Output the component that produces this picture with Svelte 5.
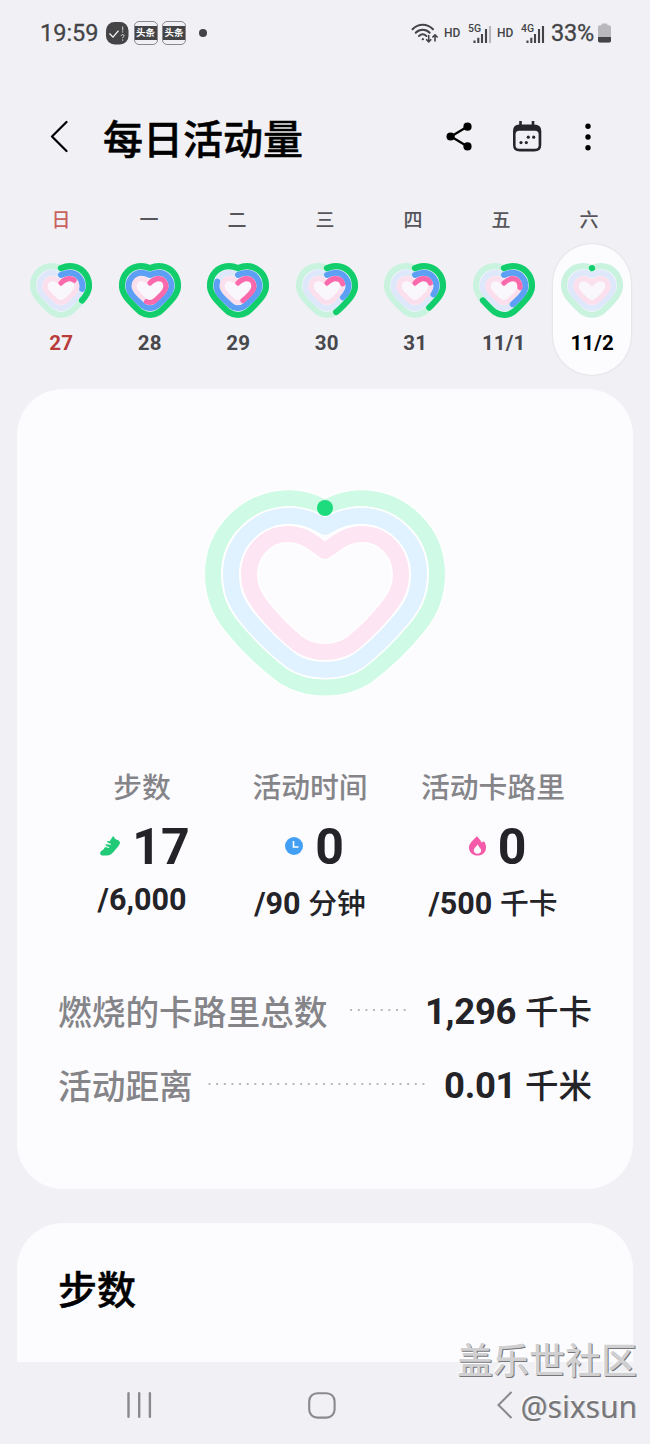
<script lang="ts">
  type Day = { name: string; date: string; steps: number; time: number; calories: number };

  const days: Day[] = [
    { name: '日', date: '27', steps: 34, time: 26, calories: 16 },
    { name: '一', date: '28', steps: 100, time: 100, calories: 54 },
    { name: '二', date: '29', steps: 100, time: 80, calories: 44 },
    { name: '三', date: '30', steps: 44, time: 34, calories: 21 },
    { name: '四', date: '31', steps: 40, time: 31, calories: 20 },
    { name: '五', date: '11/1', steps: 66, time: 42, calories: 25 },
    { name: '六', date: '11/2', steps: 0.01, time: 0, calories: 0 },
  ];
  const selected = '11/2';

  // right half of each ring, starting at the notch and ending at the bottom tip
  const largeRings = [
    { color: '#cffae5', half: [120, 18, 131, 12, 142, 8.2, 155, 8.2, 198, 8.2, 232, 42, 232, 84, 232, 105, 226, 120, 214.5, 134.5, 199, 154, 180, 172, 162, 185.5, 149, 194, 135, 197.5, 120, 197.5] },
    { color: '#e0f1ff', half: [120, 37, 131, 30, 142, 25.7, 155, 25.7, 188, 25.7, 214, 52, 214, 84, 214, 103, 208, 115, 197, 128.5, 183, 145, 168, 160, 153, 171, 143, 178, 132, 179.8, 120, 179.8] },
    { color: '#fde5f3', half: [120, 61, 131, 54, 140, 44, 157, 44, 179, 44, 196, 62, 196, 85, 196, 98, 191, 108, 182, 118.5, 172, 131, 160, 143, 148, 153, 140, 159, 131, 162, 120, 162] },
  ];

  const smallRings = [
    { key: 'steps', width: 6.2, color: '#12cd6c', track: '#c9f3df', half: [31, 5.2, 34, 4, 37, 3.2, 40, 3.2, 51, 3.2, 59, 12, 59, 23, 59, 29, 56, 33, 52, 37.5, 47, 43, 43, 47, 40, 49.2, 37, 51.2, 34, 52, 31, 52] },
    { key: 'time', width: 5.9, color: '#5c9ff5', track: '#dfe8fb', half: [31, 12, 34, 10.5, 37, 9.7, 39.5, 9.7, 47, 9.7, 52.5, 16, 52.5, 23, 52.5, 27.5, 50, 31, 47, 34.3, 44, 37.5, 41, 40, 38, 42.7, 36, 44.3, 34, 45.3, 31, 45.3] },
    { key: 'calories', width: 5.2, color: '#f969ab', track: '#fbdfec', half: [31, 20, 33, 18, 36, 15.7, 39.5, 15.7, 44, 15.7, 47, 19, 47, 23.5, 47, 26.5, 45, 28.5, 43, 31, 40.5, 33.5, 38, 36, 35.5, 38, 34, 39.2, 32.5, 39.5, 31, 39.5] },
  ] as const;

  function heart(half: readonly number[]) {
    const center = half[0];
    const points: number[][] = [];
    for (let i = 0; i < half.length; i += 2) points.push([half[i], half[i + 1]]);
    const mirrored = points.slice(0, -1).reverse().map(([x, y]) => [2 * center - x, y]);
    return `M${points[0].join(' ')}C${[...points.slice(1), ...mirrored].flat().join(' ')}Z`;
  }
</script>

<div class="screen">
  <header class="status">
    <span class="clock">19:59</span>
    <svg class="app-icon" width="23" height="23" viewBox="0 0 23 23">
      <rect width="22.5" height="22.5" rx="8.5" fill="#444447" />
      <path d="M3.5 11.5l3.5 3.7 5.5-6.5" fill="none" stroke="#fff" stroke-width="1.2" />
      <path d="M16.7 4.5v4M16.7 9.3v1.2M15.2 14c0-2 3.2-1.8 2.8 0-.2.9-1.3.9-1.3 2.2M16.7 17.5v1.2" fill="none" stroke="#ddd" stroke-width="1" />
    </svg>
    <span class="news"><b>头条</b></span>
    <span class="news"><b>头条</b></span>
    <i class="more-dot"></i>

    <div class="signals">
      <svg class="wifi" width="28" height="21" viewBox="0 0 28 21" fill="none" stroke="#444447" stroke-width="2" stroke-linecap="round">
        <path d="M1.5 6.2C7.5.2 16 .2 22 6.2M4.7 9.7c4-4 10-4 14 0M8 13c2.4-2.2 5-2.2 7.4 0" />
        <circle cx="11.7" cy="16.2" r=".7" fill="#444447" stroke-width="1" />
        <path d="M17.7 12.5v6.3M15.6 16.7l2.1 2.1 2.1-2.1M24 18v-6M21.8 14l2.2-2.1 2.2 2.1" stroke-width="1.6" />
      </svg>
      <span class="hd">HD</span>
      <svg class="bars" width="24" height="21" viewBox="0 0 24 21">
        <text x="0" y="8.5">5G</text>
        <path d="M6.5 17.5v2.5M10.3 14.7v5.3M14 11v9M18 6v14" />
        <path class="faint" d="M22 3v17" />
      </svg>
      <span class="hd second">HD</span>
      <svg class="bars" width="24" height="21" viewBox="0 0 24 21">
        <text x="0" y="8.5">4G</text>
        <path d="M6.5 17.5v2.5M10.3 14.7v5.3M14 11v9M18 6v14M22 3v17" />
      </svg>
      <span class="percent">33%</span>
      <svg width="13" height="20" viewBox="0 0 13 20">
        <path d="M3.5 2.2V1.5Q3.5.5 4.5.5h4q1 0 1 1v.7h1.7Q13 2.2 13 4v13.7q0 1.8-1.8 1.8H1.8Q0 19.5 0 17.7V4q0-1.8 1.8-1.8z" fill="#b9b9bd" />
        <path d="M0 14h13v3.7q0 1.8-1.8 1.8H1.8Q0 19.5 0 17.7z" fill="#444447" />
      </svg>
    </div>
  </header>

  <nav class="toolbar">
    <svg width="18" height="33" viewBox="0 0 18 33" fill="none" stroke="#000" stroke-width="2.2" stroke-linecap="round" stroke-linejoin="round">
      <path d="M16.5 2L2 16.5 16.5 31" />
    </svg>
    <h1>每日活动量</h1>
    <svg class="share" width="26" height="29" viewBox="0 0 26 29">
      <path d="M21.5 4.5L5 14.5l16.5 10" fill="none" stroke="#000" stroke-width="2.3" />
      <circle cx="21.5" cy="4.7" r="4.1" /><circle cx="4.6" cy="14.5" r="4.1" /><circle cx="21.5" cy="24.4" r="4.1" />
    </svg>
    <svg class="calendar" width="30" height="31" viewBox="0 0 30 31" fill="#25252b">
      <path d="M7.2 0h2.6v3.5h9.9V0h2.6v3.5Q29.3 3.5 29.3 10v14q0 6.5-7 6.5H7.7Q1 30.5 1 24V10q0-6.5 6.2-6.5z" />
      <rect x="3.6" y="9.8" width="23" height="18" rx="3.5" fill="#f1f1f5" />
      <circle cx="16.3" cy="16.2" r="1.6" /><circle cx="21.7" cy="16.2" r="1.6" />
      <circle cx="9" cy="21.6" r="1.6" /><circle cx="14.3" cy="21.6" r="1.6" />
    </svg>
    <svg class="menu" width="6" height="28" viewBox="0 0 6 28">
      <circle cx="3" cy="3.2" r="2.7" /><circle cx="3" cy="14" r="2.7" /><circle cx="3" cy="24.7" r="2.7" />
    </svg>
  </nav>

  <div class="week-names">
    {#each days as day, i}
      <span class:sunday={i === 0}>{day.name}</span>
    {/each}
  </div>

  <div class="week">
    {#each days as day, i}
      <div class="day" class:selected={day.date === selected} class:sunday={i === 0}>
        <svg width="62" height="56" viewBox="0 0 62 56" fill="none" stroke-linecap="round">
          <path d={heart(smallRings[1].half)} fill="#f9f7fb" stroke="#f4fafc" stroke-width="7" />
          {#each smallRings as ring}
            <path d={heart(ring.half)} stroke={ring.track} stroke-width={ring.width} />
          {/each}
          {#each smallRings as ring}
            {#if day[ring.key] > 0}
              <path d={heart(ring.half)} stroke={ring.color} stroke-width={ring.width} pathLength="100" stroke-dasharray="{day[ring.key]} 200" />
            {/if}
          {/each}
        </svg>
        <span class="date">{day.date}</span>
      </div>
    {/each}
  </div>

  <main>
    <section class="card">
      <svg class="heart" width="240" height="206" viewBox="0 0 240 206" fill="none" stroke-width="16" stroke-linejoin="round">
        {#each largeRings as ring}
          <path d={heart(ring.half)} stroke="#fff" stroke-width="19" />
          <path d={heart(ring.half)} stroke={ring.color} />
        {/each}
        <circle cx="120" cy="18" r="8" fill="#1edb7e" />
      </svg>

      <div class="metrics">
        <div class="metric">
          <h2>步数</h2>
          <div class="value">
            <svg class="shoe" width="20" height="20" viewBox="0 0 20 20">
              <path d="M12.8.5q.7-.6 1.2.3c.6 1.8 1.7 3 3.5 3.2 1.3.4 2.8 1.5 2.4 3.2-.7 2.3-3 4.5-5 7-2.2 2.8-4.2 5-7.5 5.2H2.2C.2 19.2-.4 17 .8 15.6c1.500-1.500 3.500-2.600 5-4.600z" fill="#20ca76" />
              <path d="M5 12.3l3.6.8M6.3 9l3.800 1M7.8 5.8l4 1" fill="none" stroke="#20ca76" stroke-width="1.6" stroke-linecap="round" />
              <path d="M5.5 10.5l3.6 1M7 7.3l3.8 1" fill="none" stroke="#fcfcff" stroke-width="1.2" />
            </svg>
            <strong>17</strong>
          </div>
          <p class="goal latin">/6,000</p>
        </div>
        <div class="metric">
          <h2>活动时间</h2>
          <div class="value">
            <svg class="timer" width="18" height="18" viewBox="0 0 18 18">
              <circle cx="9" cy="9" r="9" fill="#439ff3" />
              <path d="M8.5 4v6h5" fill="none" stroke="#fff" stroke-width="1.6" />
            </svg>
            <strong>0</strong>
          </div>
          <p class="goal">/90 <span>分钟</span></p>
        </div>
        <div class="metric">
          <h2>活动卡路里</h2>
          <div class="value">
            <svg class="flame" width="17" height="20" viewBox="0 0 17 20">
              <path d="M7.3.8Q8 .1 8.6.8c1.4 2 3 3.4 3.900 5.700q1.300-.2 1.800-.9.8-.4 1.200.5C16.500 7.700 17 9.500 17 11.700 17 16.500 13 19.600 8.500 19.600S0 16.500 0 11.800C0 7 4.300 4.500 7.300.8z" fill="#f55ba8" />
              <path d="M8.6 8.3C7.600 11 4.800 11.800 4.800 14.600c0 4.200 7.400 4.200 7.400 0 0-2.200-2.500-3.500-3.600-6.300z" fill="#fcfcff" />
            </svg>
            <strong>0</strong>
          </div>
          <p class="goal">/500 <span>千卡</span></p>
        </div>
      </div>

      <div class="total">
        <span class="label">燃烧的卡路里总数</span>
        <i class="leader"></i>
        <span class="amount">1,296 <small>千卡</small></span>
      </div>
      <div class="total">
        <span class="label">活动距离</span>
        <i class="leader"></i>
        <span class="amount">0.01 <small>千米</small></span>
      </div>
    </section>

    <section class="card steps">
      <h2>步数</h2>
    </section>
  </main>

  <footer>
    <svg width="26" height="26" viewBox="0 0 26 26" stroke="#8a8a8e" stroke-width="2.4" stroke-linecap="round">
      <path d="M1.5 1.2v23.600M12.2 1.2v23.600M22.9 1.2v23.600" />
    </svg>
    <svg class="home" width="28" height="27" viewBox="0 0 28 27" fill="none" stroke="#8a8a8e" stroke-width="2.1">
      <rect x="1.2" y="1.2" width="25.4" height="24.4" rx="8" />
    </svg>
    <svg class="back" width="16" height="28" viewBox="0 0 16 28" fill="none" stroke="#8a8a8e" stroke-width="2.1">
      <path d="M14.5 1L1.5 14l13 13" />
    </svg>
  </footer>

  <div class="watermark">
    <span>盖乐世社区</span>
    <span class="user">@sixsun</span>
  </div>
</div>

<style>
  :global(body) {
    margin: 0;
    background: #f1f1f5;
  }

  .screen {
    position: relative;
    display: flex;
    flex-direction: column;
    width: 650px;
    height: 1444px;
    overflow: hidden;
    background: #f1f1f5;
    color: #232328;
    font-family: Roboto, 'Noto Sans CJK SC', sans-serif;
  }

  svg {
    display: block;
    flex: none;
  }

  h1,
  h2,
  p {
    margin: 0;
  }

  .status {
    display: flex;
    align-items: center;
    box-sizing: border-box;
    height: 66px;
    padding: 0 39px 0 40px;
    color: #444447;
  }

  .clock {
    width: 66px;
    font-size: 23.5px;
    font-weight: 400;
    -webkit-text-stroke: 0.3px;
  }

  .news {
    display: flex;
    align-items: center;
    box-sizing: border-box;
    width: 24px;
    height: 24px;
    margin-left: 4.5px;
    border: 1px solid #89898c;
    border-radius: 5px;
  }

  .news b {
    width: 22px;
    background: #444447;
    color: #fff;
    font-size: 9.5px;
    line-height: 14px;
    text-align: center;
  }

  .more-dot {
    width: 8px;
    height: 8px;
    margin-left: 13px;
    border-radius: 50%;
    background: #444447;
  }

  .signals {
    display: flex;
    align-items: center;
    margin-left: auto;
  }

  .hd {
    margin-left: 5px;
    width: 24px;
    font-size: 12px;
    font-weight: 500;
  }

  .hd.second {
    margin-left: 5px;
  }

  .bars {
    fill: none;
    stroke: #444447;
    stroke-width: 2.1;
  }

  .bars text {
    fill: #444447;
    stroke: none;
    font-size: 10.5px;
    font-weight: 500;
  }

  .faint {
    stroke: #b9b9bd;
  }

  .percent {
    margin: 0 4px 0 6px;
    font-size: 23.5px;
    font-weight: 400;
    letter-spacing: -0.2px;
    -webkit-text-stroke: 0.3px;
  }

  .toolbar {
    display: flex;
    align-items: center;
    height: 141px;
    padding: 0 59px 0 50px;
  }

  .toolbar h1 {
    margin: 9px auto 0 35px;
    color: #000;
    font-size: 40px;
    font-weight: 500;
    line-height: 48px;
    -webkit-text-stroke: 0.5px;
  }

  .calendar {
    margin-left: 40px;
  }

  .menu {
    margin-left: 43px;
  }

  .week-names {
    display: grid;
    grid-template-columns: repeat(7, 88px);
    box-sizing: border-box;
    height: 37px;
    padding: 2px 0 0 17px;
    color: #55555a;
    font-size: 19px;
    font-weight: 500;
    line-height: 24px;
    text-align: center;
  }

  .week-names .sunday {
    color: #c9615f;
  }

  .week {
    display: grid;
    grid-template-columns: repeat(7, 88.5px);
    justify-items: center;
    height: 145px;
    padding-left: 17px;
  }

  .day {
    display: flex;
    flex-direction: column;
    align-items: center;
    box-sizing: border-box;
    width: 78px;
    height: 131px;
    padding-top: 19px;
    color: #47474c;
  }

  .day.sunday {
    color: #b83c39;
  }

  .day.selected {
    border-radius: 39px;
    background: #fcfcff;
    box-shadow: 0 0 2px rgba(0, 0, 0, 0.15);
    color: #000;
  }

  .date {
    margin-top: 12px;
    font-size: 20.5px;
    font-weight: 700;
    line-height: 24px;
    letter-spacing: 0.2px;
  }

  main {
    height: 973px;
    overflow: hidden;
    padding: 0 17px;
  }

  .card {
    box-sizing: border-box;
    height: 800px;
    padding: 101px 41px 0;
    border-radius: 46px;
    background: #fcfcff;
  }

  .heart {
    margin: 0 auto;
  }

  .metrics {
    display: grid;
    grid-template-columns: 168px 168px 198px;
    box-sizing: border-box;
    height: 278px;
    padding-top: 72px;
  }

  .metric {
    display: flex;
    flex-direction: column;
    align-items: center;
  }

  .metric h2 {
    color: #858589;
    font-size: 28.8px;
    font-weight: 500;
    line-height: 40px;
  }

  .value {
    display: flex;
    align-items: center;
    gap: 12px;
    height: 78px;
    margin-left: 9px;
  }

  .value svg {
    margin-top: -2px;
  }

  .value strong {
    font-size: 50px;
    font-weight: 700;
    line-height: 60px;
  }

  .metric:first-child .value {
    margin-left: 6px;
  }

  .goal {
    font-size: 30.5px;
    font-weight: 700;
    line-height: 36px;
    white-space: nowrap;
  }

  .goal.latin {
    margin-top: -4px;
  }

  .goal span {
    font-size: 28.8px;
    font-weight: 500;
  }

  .total {
    display: flex;
    align-items: center;
    height: 74px;
    white-space: nowrap;
  }

  .label {
    margin-top: -1px;
    color: #858589;
    font-size: 33.7px;
    font-weight: 500;
  }

  .leader {
    flex: 1;
    height: 2px;
    margin: -2px 17px 0 20px;
    background: radial-gradient(circle, #b5b5ba 1px, transparent 1.3px) right 0 / 7.65px 2px repeat-x;
  }

  .total:last-child .leader {
    margin-left: 15px;
  }

  .amount {
    margin-top: -4px;
    font-size: 36.5px;
    font-weight: 700;
    letter-spacing: -0.3px;
  }

  .amount small {
    font-size: 33.5px;
    font-weight: 500;
    letter-spacing: 0;
  }

  .card.steps {
    margin-top: 34px;
    height: 200px;
    padding-top: 40px;
  }

  .steps h2 {
    color: #000;
    font-size: 39px;
    font-weight: 500;
    line-height: 56px;
    -webkit-text-stroke: 0.5px;
  }

  footer {
    display: flex;
    align-items: center;
    box-sizing: border-box;
    height: 82px;
    padding: 4px 137px 0 127px;
  }

  .home {
    margin: 0 auto 0 155px;
  }

  .watermark {
    position: absolute;
    right: 13px;
    bottom: 16px;
    display: flex;
    flex-direction: column;
    align-items: flex-end;
    color: #d0d0d2;
    font-family: 'Noto Sans CJK SC', sans-serif;
    font-size: 36px;
    font-weight: 500;
    line-height: 36px;
    text-shadow: 1px 1px 0 #77777a, -1px -1px 0 #fff;
  }

  .watermark .user {
    margin-top: 10px;
    color: #77777a;
    font-family: 'Noto Sans', sans-serif;
    font-size: 30px;
    font-weight: 400;
    line-height: 42px;
    text-shadow: -1px -1px 0 #fff, 1px 0 0 #c8c8ca;
  }
</style>
